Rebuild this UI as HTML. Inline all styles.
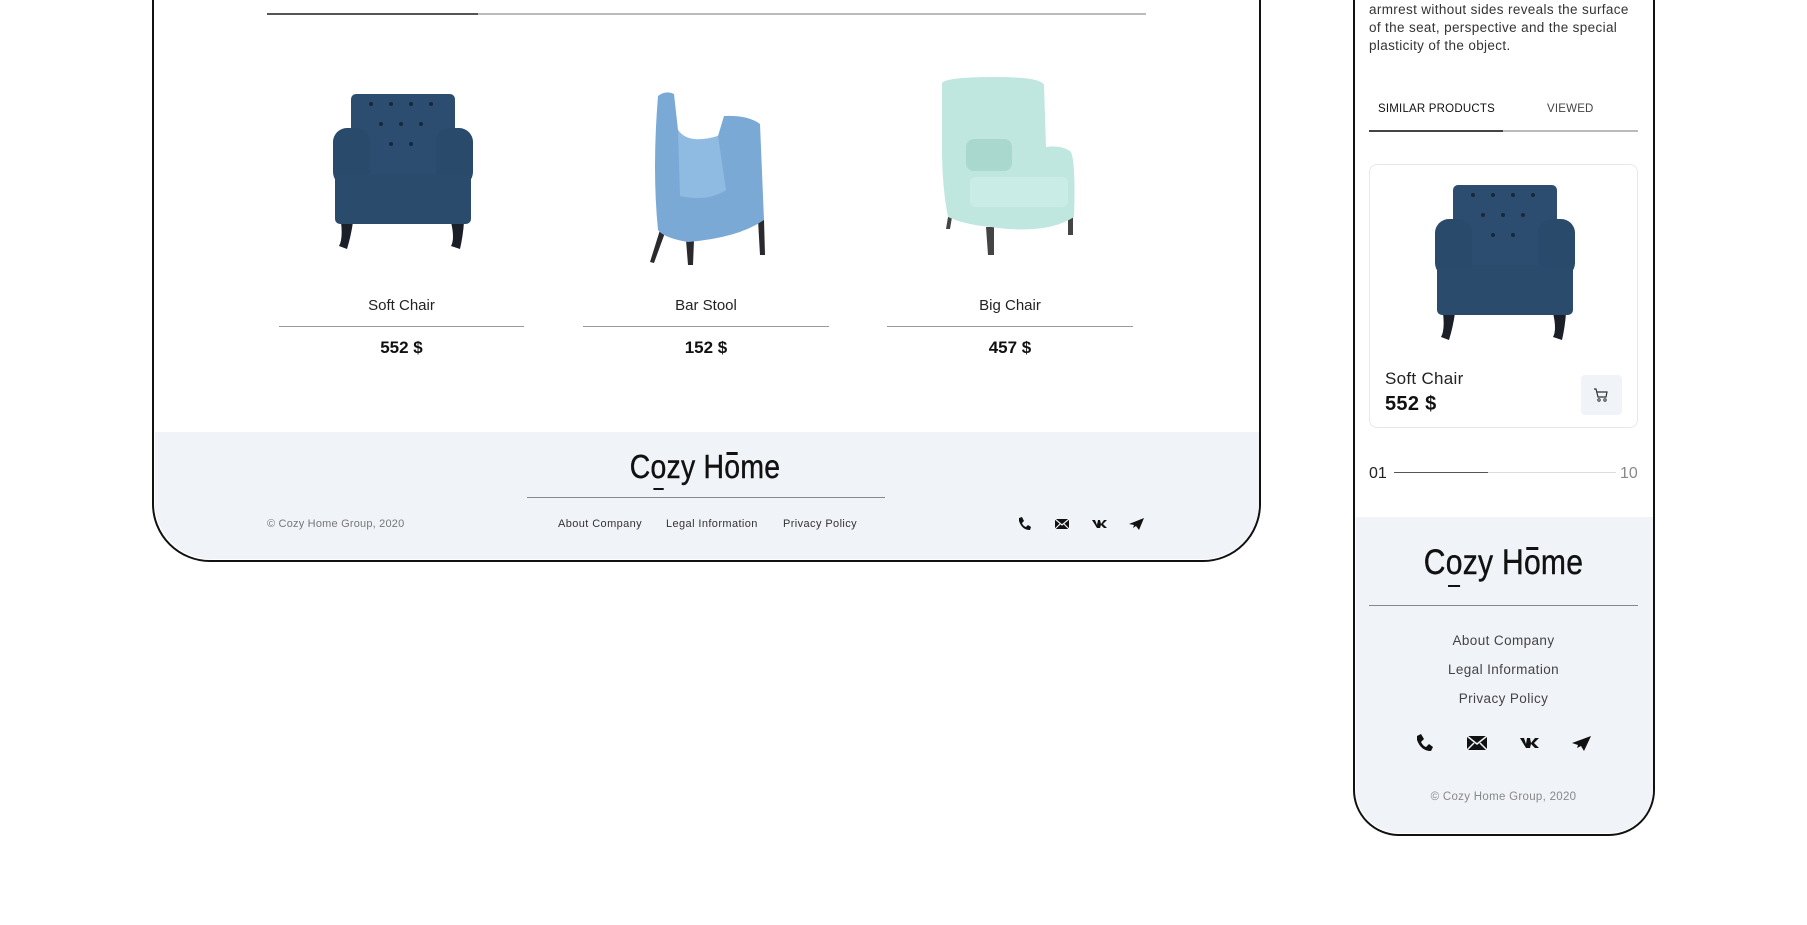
<!DOCTYPE html>
<html><head><meta charset="utf-8">
<style>
*{margin:0;padding:0;box-sizing:border-box}
body{width:1807px;height:925px;background:#fff;position:relative;overflow:hidden;font-family:"Liberation Sans",sans-serif;color:#111}
.abs{position:absolute}
.desk{left:152px;top:-40px;width:1109px;height:602px;border:2.5px solid #111;border-radius:0 0 58px 58px;overflow:hidden;background:#fff}
.mob{left:1353px;top:-40px;width:302px;height:876px;border:2.5px solid #111;border-radius:0 0 46px 46px;overflow:hidden;background:#fff}
.c{text-align:center}
.logo{font-size:33px;letter-spacing:0.3px;color:#111;white-space:nowrap;transform:scaleX(0.86);-webkit-text-stroke:0.4px #111}
.lo{position:relative;display:inline-block}
.u:after{content:"";position:absolute;left:3px;right:3px;bottom:-4px;height:2.5px;background:#111}
.o:before{content:"";position:absolute;left:3px;right:3px;top:4px;height:2.5px;background:#111}
.fl{letter-spacing:0.4px}
</style></head><body>

<div class="abs desk"></div>
<div class="abs" style="left:267px;top:13px;width:879px;height:1.5px;background:#bbb"></div>
<div class="abs" style="left:267px;top:13px;width:211px;height:2px;background:#555"></div>

<svg class="abs" style="left:333px;top:94px" width="140" height="158" viewBox="0 0 140 158">
<path d="M8 128 Q10 145 6 152 L14 155 Q18 142 20 128Z M118 128 Q122 145 118 152 L127 155 Q130 142 131 128Z" fill="#1a1f28"/>
<rect x="18" y="0" width="104" height="80" rx="5" fill="#2d4d70"/>
<rect x="0" y="34" width="37" height="58" rx="14" fill="#2a4a6c"/>
<rect x="103" y="34" width="37" height="58" rx="14" fill="#2a4a6c"/>
<rect x="2" y="80" width="136" height="50" rx="5" fill="#2b4b6d"/>
<g fill="#16283c"><circle cx="38" cy="10" r="2"/><circle cx="58" cy="10" r="2"/><circle cx="78" cy="10" r="2"/><circle cx="98" cy="10" r="2"/><circle cx="48" cy="30" r="2"/><circle cx="68" cy="30" r="2"/><circle cx="88" cy="30" r="2"/><circle cx="58" cy="50" r="2"/><circle cx="78" cy="50" r="2"/></g>
</svg>
<svg class="abs" style="left:648px;top:90px" width="130" height="176" viewBox="0 0 130 176">
<path d="M12 140 L2 172 L6 173 L18 140Z M38 150 L40 175 L45 175 L46 150Z M72 140 L73 125 L77 125 L76 140Z M110 130 L112 165 L117 165 L116 130Z" fill="#2a2a2e"/>
<path d="M10 6 Q18 0 26 4 L30 40 Q40 55 70 46 L76 26 Q100 25 112 34 L116 130 Q90 148 40 152 Q16 148 10 140 Q4 80 10 6Z" fill="#7aa9d6"/>
<path d="M30 40 Q40 55 70 46 L78 100 Q60 112 32 106Z" fill="#8fbbe3"/>
</svg>
<svg class="abs" style="left:936px;top:77px" width="148" height="180" viewBox="0 0 148 180">
<path d="M12 140 L10 152 L14 152 L16 140Z M50 150 L52 178 L58 178 L58 150Z M132 140 L132 158 L137 158 L137 140Z" fill="#444"/>
<path d="M6 6 Q10 0 60 0 Q105 0 108 8 L110 70 Q125 68 134 74 Q140 80 138 140 Q110 158 55 150 Q30 148 12 140 Q6 110 6 70Z" fill="#bfe6df"/>
<rect x="30" y="62" width="46" height="32" rx="8" fill="#a9d8cf"/>
<rect x="34" y="100" width="98" height="30" rx="6" fill="#c9ece6"/>
</svg>

<div class="abs c" style="left:279px;top:297px;width:245px;font-size:15px;color:#222">Soft Chair</div>
<div class="abs c" style="left:583px;top:297px;width:246px;font-size:15px;color:#222">Bar Stool</div>
<div class="abs c" style="left:887px;top:297px;width:246px;font-size:15px;color:#222">Big Chair</div>
<div class="abs" style="left:279px;top:326px;width:245px;height:1px;background:#999"></div>
<div class="abs" style="left:583px;top:326px;width:246px;height:1px;background:#999"></div>
<div class="abs" style="left:887px;top:326px;width:246px;height:1px;background:#999"></div>
<div class="abs c" style="left:279px;top:338px;width:245px;font-size:17px;font-weight:bold">552 $</div>
<div class="abs c" style="left:583px;top:338px;width:246px;font-size:17px;font-weight:bold">152 $</div>
<div class="abs c" style="left:887px;top:338px;width:246px;font-size:17px;font-weight:bold">457 $</div>

<div class="abs" style="left:154.5px;top:432px;width:1104px;height:127px;background:#f0f3f8;border-radius:0 0 56px 56px"></div>
<div class="abs c logo" style="left:505px;top:448px;width:400px">C<span class="lo u">o</span>zy H<span class="lo o">o</span>me</div>
<div class="abs" style="left:527px;top:497px;width:358px;height:1px;background:#888"></div>
<div class="abs fl" style="left:267px;top:518px;font-size:11px;color:#777;letter-spacing:0.2px">© Cozy Home Group, 2020</div>
<div class="abs fl" style="left:558px;top:518px;font-size:11px;color:#333">About Company</div>
<div class="abs fl" style="left:666px;top:518px;font-size:11px;color:#333">Legal Information</div>
<div class="abs fl" style="left:783px;top:518px;font-size:11px;color:#333">Privacy Policy</div>
<svg class="abs" style="left:1016px;top:516px" width="130" height="16" viewBox="0 0 130 16">
<g fill="#111">
<path d="M3 2 L6 1 L8 5 L6 7 Q7 10 10 11 L12 9 L15 11 L14 14 Q6 14 3 5Z"/>
<rect x="39" y="3" width="14" height="10"/><path d="M39 3 L46 9 L53 3 M39 13 L44 8 M53 13 L48 8" stroke="#f0f3f8" stroke-width="1.2" fill="none"/>
<path d="M76 4 L79 4 L81 9 L82 4 L84 4 L85 8 L88 4 L91 4 L87 8 L91 12 L88 12 L85 9 L84 12 L81 12Z"/>
<path d="M113 8 L128 2 L123 14 L120 10 L117 12 L118 9Z"/>
</g></svg>

<div class="abs mob"></div>
<div class="abs" style="left:1369px;top:1px;font-size:13.5px;line-height:18px;color:#333;white-space:nowrap;letter-spacing:0.35px">armrest without sides reveals the surface<br>of the seat, perspective and the special<br>plasticity of the object.</div>
<div class="abs" style="left:1378px;top:103px;font-size:11.5px;color:#111;letter-spacing:0.2px">SIMILAR PRODUCTS</div>
<div class="abs" style="left:1547px;top:103px;font-size:11.5px;color:#444;letter-spacing:0.2px">VIEWED</div>
<div class="abs" style="left:1369px;top:130px;width:269px;height:1.5px;background:#bbb"></div>
<div class="abs" style="left:1369px;top:129.5px;width:134px;height:2px;background:#444"></div>
<div class="abs" style="left:1369px;top:164px;width:269px;height:264px;border:1px solid #e6e8ec;border-radius:8px"></div>
<svg class="abs" style="left:1435px;top:185px" width="140" height="158" viewBox="0 0 140 158">
<path d="M8 128 Q10 145 6 152 L14 155 Q18 142 20 128Z M118 128 Q122 145 118 152 L127 155 Q130 142 131 128Z" fill="#1a1f28"/>
<rect x="18" y="0" width="104" height="80" rx="5" fill="#2d4d70"/>
<rect x="0" y="34" width="37" height="58" rx="14" fill="#2a4a6c"/>
<rect x="103" y="34" width="37" height="58" rx="14" fill="#2a4a6c"/>
<rect x="2" y="80" width="136" height="50" rx="5" fill="#2b4b6d"/>
<g fill="#16283c"><circle cx="38" cy="10" r="2"/><circle cx="58" cy="10" r="2"/><circle cx="78" cy="10" r="2"/><circle cx="98" cy="10" r="2"/><circle cx="48" cy="30" r="2"/><circle cx="68" cy="30" r="2"/><circle cx="88" cy="30" r="2"/><circle cx="58" cy="50" r="2"/><circle cx="78" cy="50" r="2"/></g>
</svg>
<div class="abs" style="left:1385px;top:369px;font-size:17px;color:#222;letter-spacing:0.3px">Soft Chair</div>
<div class="abs" style="left:1385px;top:393px;font-size:20px;font-weight:bold;letter-spacing:0.3px">552 $</div>
<div class="abs" style="left:1581px;top:375px;width:41px;height:40px;background:#f0f3f8;border-radius:4px"></div>
<svg class="abs" style="left:1593px;top:387px" width="16" height="16" viewBox="0 0 16 16"><path d="M1 2 L3 2 L5 10 L13 10 L14 5 L4 5" fill="none" stroke="#333" stroke-width="1.2"/><circle cx="6" cy="13" r="1.2" fill="none" stroke="#333"/><circle cx="12" cy="13" r="1.2" fill="none" stroke="#333"/></svg>
<div class="abs" style="left:1369px;top:465px;font-size:16px;color:#222">01</div>
<div class="abs" style="left:1394px;top:472px;width:222px;height:1px;background:#ddd"></div>
<div class="abs" style="left:1394px;top:471.5px;width:94px;height:1.5px;background:#555"></div>
<div class="abs" style="left:1620px;top:465px;font-size:16px;color:#888">10</div>

<div class="abs" style="left:1355.5px;top:517px;width:297px;height:316px;background:#f0f3f8;border-radius:0 0 44px 44px"></div>
<div class="abs c logo" style="left:1355px;top:543px;width:297px;font-size:35px">C<span class="lo u">o</span>zy H<span class="lo o">o</span>me</div>
<div class="abs" style="left:1369px;top:605px;width:269px;height:1px;background:#888"></div>
<div class="abs c fl" style="left:1355px;top:633px;width:297px;font-size:13.5px;color:#444">About Company</div>
<div class="abs c fl" style="left:1355px;top:662px;width:297px;font-size:13.5px;color:#444">Legal Information</div>
<div class="abs c fl" style="left:1355px;top:691px;width:297px;font-size:13.5px;color:#444">Privacy Policy</div>
<svg class="abs" style="left:1414px;top:733px" width="180" height="20" viewBox="0 0 180 20">
<g fill="#111">
<path d="M3 3 L7 1 L10 6 L7 9 Q9 13 12 14 L15 11 L19 14 L17 18 Q7 18 3 7Z"/>
<rect x="53" y="3" width="20" height="14"/><path d="M53 3 L63 11 L73 3 M53 17 L60 10 M73 17 L66 10" stroke="#f0f3f8" stroke-width="1.5" fill="none"/>
<path d="M106 5 L110 5 L112 11 L113 5 L116 5 L117 10 L121 5 L125 5 L120 10 L125 15 L121 15 L117 11 L116 15 L112 15Z"/>
<path d="M158 10 L177 3 L170 18 L167 13 L163 15 L164 12Z"/>
</g></svg>
<div class="abs c" style="left:1355px;top:791px;width:297px;font-size:11.5px;color:#888;letter-spacing:0.3px">© Cozy Home Group, 2020</div>
</body></html>
